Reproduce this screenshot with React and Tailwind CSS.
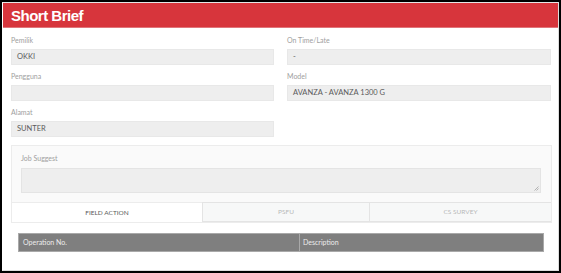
const leftFields = [
  { label: "Pemilik", value: "OKKI" },
  { label: "Pengguna", value: "" },
  { label: "Alamat", value: "SUNTER" },
];

const rightFields = [
  { label: "On Time/Late", value: "-" },
  { label: "Model", value: "AVANZA - AVANZA 1300 G" },
];

function Field({ label, value }) {
  return (
    <div className="flex flex-col">
      <div className="h-[10px] leading-[10px] text-[7px] text-[#a0a0a0]">{label}</div>
      <div className="mt-[4px] h-[16px] bg-[#eeeeee] border border-[#e8e8e8] px-[5px] flex items-center text-[7.5px] text-[#5a5a5a]">
        {value}
      </div>
    </div>
  );
}

export default function App() {
  return (
    <div
      className="w-[561px] h-[273px] border-2 border-black bg-white overflow-hidden"
      style={{ fontFamily: "Lato, 'Open Sans', sans-serif" }}
    >
      <div className="h-full border border-[#dddddd] border-l-white border-t-[#e6e6e6] flex flex-col">
        <header className="h-[25px] bg-[#d7353c] border-b border-[#e0757a] flex items-center pl-[8px] shrink-0">
          <h1
            className="text-white font-bold text-[15px] tracking-[-0.5px] leading-none"
            style={{ fontFamily: "'Liberation Sans', Arial, sans-serif" }}
          >
            Short Brief
          </h1>
        </header>

        <div className="pl-[8px] pr-[6px] pt-[7px] flex flex-col">
          <div className="grid grid-cols-[263px_264px] gap-x-[13px]">
            <div className="flex flex-col gap-[6px]">
              {leftFields.map((f) => (
                <Field key={f.label} {...f} />
              ))}
            </div>
            <div className="flex flex-col gap-[6px]">
              {rightFields.map((f) => (
                <Field key={f.label} {...f} />
              ))}
            </div>
          </div>

          <div className="mt-[8px] border border-[#ececec] bg-[#fafafa] flex flex-col">
            <div className="pt-[7px] pl-[9px] pr-[10px]">
              <div className="h-[10px] leading-[10px] text-[7px] text-[#a0a0a0]">Job Suggest</div>
              <div className="mt-[5px] h-[25px] bg-[#eeeeee] border border-[#e4e4e4] relative">
                <svg className="absolute right-[1px] bottom-[1px]" width="5" height="5" viewBox="0 0 5 5">
                  <path d="M4.5 0.5 L0.5 4.5 M4.5 2.5 L2.5 4.5" stroke="#999" strokeWidth="0.7" />
                </svg>
              </div>
            </div>
            <div className="mt-[9px] flex h-[20px] text-[6.5px]">
              <div className="w-[190px] bg-white border-t border-[#ececec] flex items-center justify-center text-[#5a5a5a]">
                FIELD ACTION
              </div>
              <div className="w-[167px] bg-[#f7f8f8] border-t border-l border-b border-[#e4e4e4] flex items-center justify-center text-[#b8b8b8]">
                PSFU
              </div>
              <div className="flex-1 bg-[#f7f8f8] border-t border-l border-b border-[#e4e4e4] flex items-center justify-center text-[#b8b8b8]">
                CS SURVEY
              </div>
            </div>
          </div>

          <div className="mt-[10px] ml-[7px] mr-[8px] h-[19px] bg-[#7f7f7f] border border-[#a9a9a9] flex text-[7px] text-[#ececec]">
            <div className="w-[281px] border-r border-[#a9a9a9] flex items-center pl-[4px]">Operation No.</div>
            <div className="flex-1 flex items-center pl-[3px]">Description</div>
          </div>
        </div>
      </div>
    </div>
  );
}
